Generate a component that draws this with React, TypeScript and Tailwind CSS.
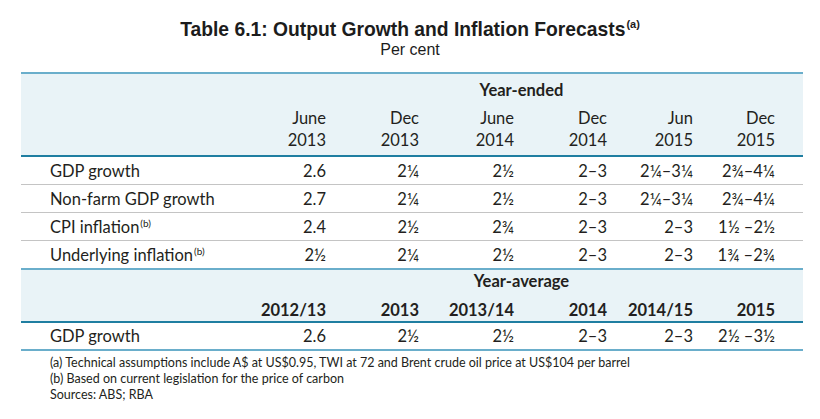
import React from 'react';

const cols = 'grid grid-cols-[219px_86px_93px_95px_93px_86px_82px_28px]';

const yearEnded = [
  ['June', '2013'],
  ['Dec', '2013'],
  ['June', '2014'],
  ['Dec', '2014'],
  ['Jun', '2015'],
  ['Dec', '2015'],
];

const rows: { label: string; note?: string; values: string[] }[] = [
  { label: 'GDP growth', values: ['2.6', '2¼', '2½', '2–3', '2¼–3¼', '2¾–4¼'] },
  { label: 'Non-farm GDP growth', values: ['2.7', '2¼', '2½', '2–3', '2¼–3¼', '2¾–4¼'] },
  { label: 'CPI inflation', note: '(b)', values: ['2.4', '2½', '2¾', '2–3', '2–3', '1½ –2½'] },
  { label: 'Underlying inflation', note: '(b)', values: ['2½', '2¼', '2½', '2–3', '2–3', '1¾ –2¾'] },
];

const yearAverage = ['2012/13', '2013', '2013/14', '2014', '2014/15', '2015'];

function DataRow({ label, note, values, border }: { label: string; note?: string; values: string[]; border: string }) {
  return (
    <div className={`${cols} h-[28px] items-center leading-[22px] ${border}`}>
      <div className="pl-[29px]">
        {label}
        {note && <sup className="relative -top-[6px] ml-[1px] text-[10px]">{note}</sup>}
      </div>
      {values.map((v, i) => (
        <div key={i} className="text-right whitespace-nowrap">
          {v}
        </div>
      ))}
      <div />
    </div>
  );
}

export default function App() {
  return (
    <div className="h-[419px] w-[820px] bg-white text-[#231f20]">
      <div className="pt-[19px] text-center font-['Liberation_Sans',Arial,sans-serif]">
        <div className="text-[19.3px] font-bold leading-[22px] text-[#1c1c1c]">
          Table 6.1: Output Growth and Inflation Forecasts
          <sup className="relative -top-[8px] ml-[1px] text-[11px] font-bold">(a)</sup>
        </div>
        <div className="text-[16px] leading-[18px] text-[#1c1c1c]">Per cent</div>
      </div>

      <div className="ml-[21px] mt-[13px] w-[782px] font-['Lato','Noto_Sans',sans-serif] text-[16.5px]">
        <div className="border-t-2 border-b-2 border-t-[#6aaecb] border-b-[#1f7ea1] bg-[#e9f3f7] pt-[5px] pb-[4px]">
          <div className={`${cols} leading-[22px]`}>
            <div className="col-start-2 col-span-7 text-center font-bold">Year-ended</div>
          </div>
          <div className={`${cols} mt-[6px] leading-[22px]`}>
            <div />
            {yearEnded.map(([m, y], i) => (
              <div key={i} className="text-right">
                <div>{m}</div>
                <div>{y}</div>
              </div>
            ))}
            <div />
          </div>
        </div>

        {rows.map((r, i) => (
          <DataRow
            key={r.label}
            {...r}
            border={i === rows.length - 1 ? 'h-[29px] border-b-2 border-[#6aaecb]' : 'border-b border-[#c4c4c4]'}
          />
        ))}

        <div className="border-b-2 border-[#1f7ea1] bg-[#e9f3f7] pb-[1px]">
          <div className={`${cols} leading-[22px]`}>
            <div className="col-start-2 col-span-7 text-center font-bold">Year-average</div>
          </div>
          <div className={`${cols} mt-[8px] leading-[20px] font-bold`}>
            <div />
            {yearAverage.map((y) => (
              <div key={y} className="text-right">
                {y}
              </div>
            ))}
            <div />
          </div>
        </div>

        <DataRow
          label="GDP growth"
          values={['2.6', '2½', '2½', '2–3', '2–3', '2½ –3½']}
          border="border-b-2 border-[#6aaecb]"
        />

        <div className="pt-[4px] pl-[29px] text-[12.5px] leading-[16px]">
          <div>(a) Technical assumptions include A$ at US$0.95, TWI at 72 and Brent crude oil price at US$104 per barrel</div>
          <div>(b) Based on current legislation for the price of carbon</div>
          <div>Sources: ABS; RBA</div>
        </div>
      </div>
    </div>
  );
}
